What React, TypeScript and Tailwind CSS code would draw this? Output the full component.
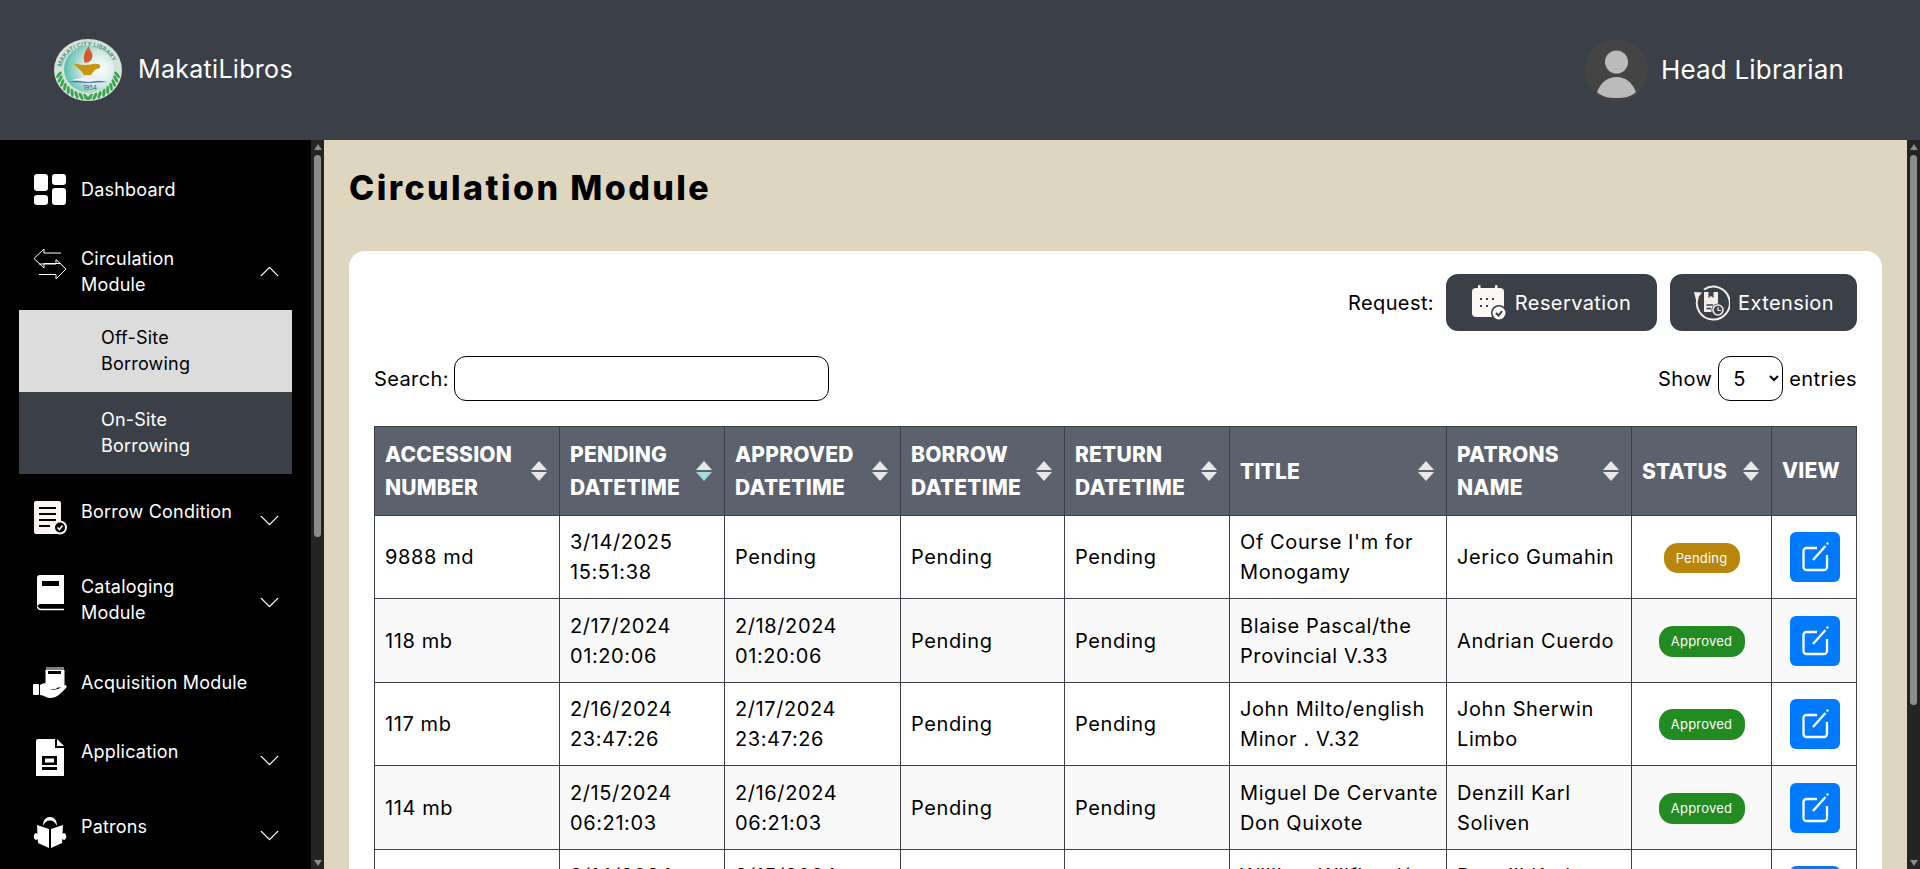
import type { ReactNode } from "react";
import { ChevronDown, ChevronUp } from "lucide-react";

const COLS = [185, 165, 176, 164, 165, 217, 185, 140, 85];

const HEADERS = [
  "ACCESSION\nNUMBER",
  "PENDING\nDATETIME",
  "APPROVED\nDATETIME",
  "BORROW\nDATETIME",
  "RETURN\nDATETIME",
  "TITLE",
  "PATRONS\nNAME",
  "STATUS",
];

const ROWS = [
  { acc: "9888 md", pending: "3/14/2025\n15:51:38", approved: "Pending", title: "Of Course I'm for\nMonogamy", name: "Jerico Gumahin", status: "Pending" },
  { acc: "118 mb", pending: "2/17/2024\n01:20:06", approved: "2/18/2024\n01:20:06", title: "Blaise Pascal/the\nProvincial V.33", name: "Andrian Cuerdo", status: "Approved" },
  { acc: "117 mb", pending: "2/16/2024\n23:47:26", approved: "2/17/2024\n23:47:26", title: "John Milto/english\nMinor . V.32", name: "John Sherwin\nLimbo", status: "Approved" },
  { acc: "114 mb", pending: "2/15/2024\n06:21:03", approved: "2/16/2024\n06:21:03", title: "Miguel De Cervante\nDon Quixote", name: "Denzill Karl\nSoliven", status: "Approved" },
  { acc: "113 mb", pending: "2/14/2024\n05:11:20", approved: "2/15/2024\n05:11:20", title: "William Wilfhard/\nThe Tempest", name: "Denzill Karl\nSoliven", status: "Approved" },
];

// laurel leaves for the seal, placed along the lower part of the ring
const LEAVES = Array.from({ length: 9 }, (_, i) => {
  const a = ((170 - i * 9.5) * Math.PI) / 180;
  return { x: 29.5 * Math.cos(a), y: 27 * Math.sin(a), rot: 170 - i * 9.5 };
});

function DashboardIcon() {
  return (
    <svg width="34" height="34" viewBox="0 0 34 34" fill="white">
      <rect x="1" y="1" width="14" height="17" rx="3" />
      <rect x="19" y="1" width="14" height="11" rx="3" />
      <rect x="1" y="22" width="14" height="10" rx="3" />
      <rect x="19" y="15" width="14" height="17" rx="3" />
    </svg>
  );
}

function CirculationIcon() {
  return (
    <svg width="34" height="32" viewBox="0 0 34 32" fill="none" stroke="white" strokeWidth="1">
      <path d="M28 5H11V1L1 10.500L11 20V15.500H28" />
      <path d="M6 16H23V11.500L33 21L23 31V26.500H6" />
    </svg>
  );
}

function ConditionIcon() {
  return (
    <svg width="34" height="36" viewBox="0 0 34 36">
      <path d="M3 1H26a2 2 0 0 1 2 2V34H3a2 2 0 0 1-2-2V3a2 2 0 0 1 2-2Z" fill="#fbf6f3" />
      <path d="M6 8H23M6 14H23M6 20H23M6 26H17" stroke="black" strokeWidth="2.200" />
      <circle cx="27" cy="27.500" r="7" fill="#fbf6f3" />
      <circle cx="27" cy="27.500" r="5" fill="black" />
      <path d="M24.500 27.500L26.500 29.500L29.500 25.500" stroke="white" strokeWidth="1.500" fill="none" />
    </svg>
  );
}

function BookIcon() {
  return (
    <svg width="28" height="36" viewBox="0 0 28 36" className="ml-[3px]">
      <path d="M4 0H28V29H5a4 4 0 0 0-4 3V3a3 3 0 0 1 3-3Z" fill="white" />
      <rect x="6" y="6" width="17" height="5" fill="black" />
      <path d="M28 34.500H5a3.500 3.500 0 0 1-3.500-3" stroke="white" strokeWidth="1.500" fill="none" />
    </svg>
  );
}

function AcquisitionIcon() {
  return (
    <svg width="34" height="32" viewBox="0 0 34 32" fill="white">
      <path d="M13 3H31V20H13Z" stroke="white" strokeWidth="1" fill="white" />
      <path d="M13 1H31M15 3V19" stroke="white" strokeWidth="1" />
      <rect x="15" y="4" width="13" height="3" fill="black" />
      <rect x="0" y="17" width="6" height="11" rx="1" />
      <path d="M7 18C11 15 15 16 19 19H23C25 19 25 22 22 22H17C19 23 24 23 27 21L32 18C34 18 34 20 33 21C28 26 24 31 17 31C13 31 11 28 7 28Z" />
    </svg>
  );
}

function ApplicationIcon() {
  return (
    <svg width="28" height="37" viewBox="0 0 28 37" className="ml-[3px]">
      <path d="M0 2a2 2 0 0 1 2-2H19V9H28V37H0Z" fill="white" />
      <path d="M21 0L28 7H21Z" fill="white" />
      <rect x="6" y="17" width="15" height="9" fill="black" />
      <rect x="9" y="19.500" width="9" height="4" fill="white" />
      <rect x="6" y="28" width="15" height="3" fill="black" />
    </svg>
  );
}

function PatronsIcon() {
  return (
    <svg width="34" height="32" viewBox="0 0 34 32" fill="white">
      <path d="M10 10C10 4 13 1 17 1S24 4 24 10C22 6 20 4.500 17 4.500S12 6 10 10Z" />
      <path d="M4 9L16 13V32L5 27Z" />
      <path d="M30 9L18 13V32L29 27Z" />
      <path d="M3 17C0 18 0 23 3 24L5 23V18Z" />
      <path d="M31 17C34 18 34 23 31 24L29 23V18Z" />
    </svg>
  );
}

function CalendarCheckIcon() {
  return (
    <svg width="35" height="36" viewBox="0 0 35 36" fill="#fbf8f5">
      <rect x="0" y="3" width="32" height="29" rx="4" />
      <rect x="6" y="0" width="2.500" height="6" rx="1" />
      <rect x="23" y="0" width="2.500" height="6" rx="1" />
      <g fill="#3b3f47">
        <rect x="8" y="13" width="2" height="2" />
        <rect x="14" y="13" width="2" height="2" />
        <rect x="20" y="13" width="2" height="2" />
        <rect x="8" y="20" width="2" height="2" />
        <rect x="14" y="20" width="2" height="2" />
      </g>
      <circle cx="27" cy="28" r="8" fill="#3b3f47" />
      <circle cx="27" cy="28" r="6.500" />
      <path d="M24 28L26.500 30.500L30 26" stroke="#3b3f47" strokeWidth="2" fill="none" />
    </svg>
  );
}

function ExtensionIcon() {
  return (
    <svg width="37" height="38" viewBox="0 0 37 38" fill="none">
      <path d="M10 3.500A16.500 16.500 0 1 1 4 11" stroke="#f3eee9" strokeWidth="2" transform="translate(1 2)" />
      <path d="M1 8L9 8.500L3 16Z" fill="#f3eee9" />
      <path d="M11 8H25V19.500A7 7 0 0 0 18.500 28H11Z" fill="#f3eee9" />
      <path d="M13.500 21H20M13.500 24.500H18" stroke="#3b3f47" strokeWidth="1.400" />
      <path d="M15.500 8V14L18 12L20.500 14V8" fill="#3b3f47" />
      <circle cx="25" cy="26" r="5" stroke="#f3eee9" strokeWidth="1.600" />
      <path d="M25 23V26.500H28" stroke="#f3eee9" strokeWidth="1.200" />
    </svg>
  );
}

function EditIcon() {
  return (
    <svg width="27" height="30" viewBox="0 0 27 30" fill="none" stroke="white" strokeWidth="2.300">
      <path d="M15 6H4.500a3 3 0 0 0-3 3V25a3 3 0 0 0 3 3H22a3 3 0 0 0 3-3V13" />
      <path d="M11 18L23.500 4" />
      <circle cx="25.500" cy="1.500" r="1.200" fill="white" stroke="none" />
    </svg>
  );
}

function SortIcon({ active }: { active?: boolean }) {
  return (
    <svg width="16" height="20" viewBox="0 0 16 20" className="shrink-0">
      <path d="M8 0L16 9H0Z" fill="#e8e8e8" />
      <path d="M0 11H16L8 20Z" fill={active ? "#a9d8e6" : "#e8e8e8"} />
    </svg>
  );
}

function Logo() {
  return (
    <svg width="68" height="62" viewBox="0 0 68 62" className="shrink-0">
      <defs>
        <radialGradient id="seal" cx="0.72" cy="0.5" r="0.8">
          <stop offset="0" stopColor="#ffffff" />
          <stop offset="0.45" stopColor="#cfeae3" />
          <stop offset="1" stopColor="#3fb3a1" />
        </radialGradient>
        <path id="ring" d="M7 33A27 26 0 0 1 61 33" />
      </defs>
      <ellipse cx="34" cy="31" rx="34" ry="31" fill="#d3e2da" />
      <ellipse cx="35" cy="30" rx="25" ry="23.500" fill="url(#seal)" />
      <text fontSize="6" fontWeight="700" fill="#5b9c86">
        <textPath href="#ring" startOffset="6%">MAKATI CITY LIBRARY</textPath>
      </text>
      <path d="M31 24C28 18 31 12 35 7C35 11 40 14 38 19C37 23 34 23 31 24Z" fill="#d9592c" />
      <path d="M19 24.500C23 25 27 26 31 26C36 26 40 24 43 25C47 24.500 48 30 42 30C40 32 38 34 37 36H30C28 32 24 29 19 24.500Z" fill="#c8950f" />
      <path d="M14 43L34 40L54 43L34 44Z" fill="#4f76b5" />
      <path d="M18 41L34 37L50 41L34 43Z" fill="#eef2f5" />
      <text x="36" y="51" fontSize="6" fill="#555" textAnchor="middle">1954</text>
      {LEAVES.map((l, i) => (
        <g key={i}>
          <ellipse cx={34 + l.x} cy={31 + l.y} rx="4" ry="1.500" fill="#3aa54f" transform={`rotate(${l.rot - 40} ${34 + l.x} ${31 + l.y})`} />
          <ellipse cx={34 - l.x} cy={31 + l.y} rx="4" ry="1.500" fill="#3aa54f" transform={`rotate(${40 - l.rot} ${34 - l.x} ${31 + l.y})`} />
        </g>
      ))}
      <path d="M30 60C30 57 38 57 38 60Z" fill="#3aa54f" />
    </svg>
  );
}

function ScrollTrack({ thumb }: { thumb: string }) {
  return (
    <div className="flex w-[13px] shrink-0 flex-col items-center bg-[#242424] pb-[3px] pt-[4px]">
      <svg width="8" height="6" viewBox="0 0 8 6" fill="#8c8c8c" className="shrink-0">
        <path d="M4 0L8 6H0Z" />
      </svg>
      <div className={`mt-[5px] w-[7px] rounded-full bg-[#8c8c8c] ${thumb}`} />
      <svg width="8" height="6" viewBox="0 0 8 6" fill="#8c8c8c" className="mt-auto shrink-0">
        <path d="M0 0H8L4 6Z" />
      </svg>
    </div>
  );
}

function NavItem({ icon, label, h, open, chevron, itemClass, iconClass, textClass }: { icon: ReactNode; label: string; h: string; open?: boolean; chevron?: boolean; itemClass?: string; iconClass?: string; textClass?: string }) {
  return (
    <div className={`flex items-center pl-[33px] pr-[25px] ${h} ${itemClass ?? ""}`}>
      <div className={`w-[48px] shrink-0 ${iconClass ?? ""}`}>{icon}</div>
      <span className={`flex-1 whitespace-pre-line text-[18px] leading-[26px] tracking-[0.2px] text-white ${textClass ?? ""}`}>{label}</span>
      {chevron && (open ? <ChevronUp size={33} strokeWidth={1} color="white" /> : <ChevronDown size={33} strokeWidth={1} color="white" />)}
    </div>
  );
}

function Sidebar() {
  return (
    <div className="flex w-[324px] shrink-0">
      <nav className="min-w-0 flex-1 overflow-y-auto bg-black">
        <NavItem icon={<DashboardIcon />} label="Dashboard" h="h-[98px]" itemClass="pt-[2px]" />
        <NavItem icon={<CirculationIcon />} label={"Circulation\nModule"} h="h-[72px]" itemClass="pb-[5px]" iconClass="mb-[15px]" chevron open />
        <div className="ml-[19px] w-[273px]">
          <div className="flex h-[82px] items-center whitespace-pre-line bg-[#dcdcdc] pl-[82px] text-[18px] leading-[26px] tracking-[0.2px] text-black">{"Off-Site\nBorrowing"}</div>
          <div className="flex h-[82px] items-center whitespace-pre-line bg-[#3b3f47] pl-[82px] text-[18px] leading-[26px] tracking-[0.2px] text-white">{"On-Site\nBorrowing"}</div>
        </div>
        <NavItem icon={<ConditionIcon />} label="Borrow Condition" h="h-[92px]" iconClass="mb-[4px]" chevron textClass="pb-[16px]" />
        <NavItem icon={<BookIcon />} label={"Cataloging\nModule"} h="h-[72px]" iconClass="mb-[18px]" chevron textClass="pb-[5px]" />
        <NavItem icon={<AcquisitionIcon />} label="Acquisition Module" h="h-[90px]" />
        <NavItem icon={<ApplicationIcon />} label="Application" h="h-[64px]" iconClass="mb-[6px]" chevron textClass="pb-[16px]" />
        <NavItem icon={<PatronsIcon />} label="Patrons" h="h-[86px]" iconClass="mb-[6px]" chevron textClass="pb-[16px]" />
      </nav>
      <ScrollTrack thumb="h-[382px]" />
    </div>
  );
}

function RequestButton({ icon, label, className }: { icon: ReactNode; label: string; className: string }) {
  return (
    <button className={`flex h-[57px] items-center justify-center gap-[8px] rounded-[12px] bg-[#3b3f47] text-[20px] tracking-[0.4px] text-white ${className}`}>
      {icon}
      {label}
    </button>
  );
}

function DataTable() {
  return (
    <table className="w-full table-fixed border-collapse text-[20px] leading-[30px] tracking-[0.6px] text-black">
      <colgroup>
        {COLS.map((w, i) => (
          <col key={i} style={{ width: w }} />
        ))}
      </colgroup>
      <thead>
        <tr className="h-[89px] bg-[#5c626d] text-white">
          {HEADERS.map((h, i) => (
            <th key={h} className="border border-[#3b3f47] pl-[10px] pr-[12px] text-left text-[21px] font-extrabold leading-[33px] tracking-[0.2px]">
              <div className="flex items-center justify-between">
                <span className="whitespace-pre-line">{h}</span>
                <SortIcon active={i === 1} />
              </div>
            </th>
          ))}
          <th className="border border-[#3b3f47] px-[10px] text-left text-[21px] font-extrabold tracking-[0.2px]">VIEW</th>
        </tr>
      </thead>
      <tbody>
        {ROWS.map((r, i) => (
          <tr key={r.acc} className={i % 2 === 1 ? "h-[84px] bg-[#f9f9f9]" : "h-[83px] bg-white"}>
            <td className="border border-[#3b3f47] px-[10px]">{r.acc}</td>
            <td className="whitespace-pre border border-[#3b3f47] px-[10px]">{r.pending}</td>
            <td className="whitespace-pre border border-[#3b3f47] px-[10px]">{r.approved}</td>
            <td className="border border-[#3b3f47] px-[10px]">Pending</td>
            <td className="border border-[#3b3f47] px-[10px]">Pending</td>
            <td className="whitespace-pre border border-[#3b3f47] px-[10px]">{r.title}</td>
            <td className="whitespace-pre border border-[#3b3f47] px-[10px]">{r.name}</td>
            <td className="border border-[#3b3f47] px-[10px] text-center tracking-normal">
              {r.status === "Pending" ? (
                <span className="inline-block h-[30px] w-[76px] rounded-[14px] bg-[#b8860b] align-middle text-[13px] leading-[30px] tracking-[0.2px] text-white">Pending</span>
              ) : (
                <span className="inline-block h-[31px] w-[86px] rounded-[14px] bg-[#228b22] align-middle text-[13px] leading-[31px] tracking-[0.2px] text-white">Approved</span>
              )}
            </td>
            <td className="border border-[#3b3f47] px-[10px]">
              <button className="ml-[8px] flex h-[50px] w-[50px] items-center justify-center rounded-[6px] bg-[#007bff]">
                <EditIcon />
              </button>
            </td>
          </tr>
        ))}
      </tbody>
    </table>
  );
}

export default function App() {
  return (
    <div className="flex h-screen flex-col overflow-hidden [font-family:Inter,sans-serif]">
      <header className="flex h-[140px] shrink-0 items-center justify-between bg-[#3b3f47] pl-[54px] pr-[76px] text-white">
        <div className="flex items-center gap-[16px]">
          <Logo />
          <span className="text-[25px] tracking-[0.3px]">MakatiLibros</span>
        </div>
        <div className="flex items-center gap-[13px]">
          <svg width="63" height="63" viewBox="0 0 63 63">
            <circle cx="31.500" cy="31.500" r="31.500" fill="#444444" />
            <circle cx="31.500" cy="23" r="11.500" fill="#bbbbbb" />
            <path d="M12 53C16 43 23 38 31.500 38S47 43 51 53C46 58 39 59 31.500 59S17 58 12 53Z" fill="#bbbbbb" />
          </svg>
          <span className="pb-[2px] text-[26px] tracking-[0.2px]">Head Librarian</span>
        </div>
      </header>
      <div className="flex min-h-0 flex-1">
        <Sidebar />
        <main className="min-w-0 flex-1 overflow-y-auto bg-[#dfd6c0] px-[25px] pb-[60px] pt-[26px]">
          <h1 className="text-[34px] font-extrabold leading-[44px] tracking-[2.400px] text-black">Circulation Module</h1>
          <section className="mt-[41px] rounded-[16px] bg-white px-[25px] pb-[70px] pt-[23px] text-[20px] tracking-[0.4px] text-black">
            <div className="flex items-center justify-end">
              <span className="mr-[12px]">Request:</span>
              <RequestButton icon={<CalendarCheckIcon />} label="Reservation" className="w-[211px]" />
              <RequestButton icon={<ExtensionIcon />} label="Extension" className="ml-[13px] w-[187px]" />
            </div>
            <div className="mt-[25px] flex items-center justify-between">
              <label className="flex items-center gap-[5px]">
                Search:
                <input className="h-[45px] w-[375px] rounded-[12px] border border-black bg-white" />
              </label>
              <div className="flex items-center gap-[6px]">
                Show
                <select className="h-[45px] w-[65px] rounded-[12px] border border-black bg-white px-[10px]">
                  <option>5</option>
                  <option>10</option>
                </select>
                entries
              </div>
            </div>
            <div className="mt-[25px]">
              <DataTable />
            </div>
          </section>
        </main>
        <ScrollTrack thumb="h-[550px]" />
      </div>
    </div>
  );
}
